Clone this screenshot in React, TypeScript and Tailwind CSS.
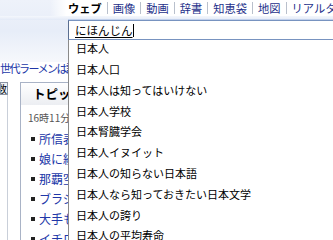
export default function App() {
  const items = [
    "日本人",
    "日本人口",
    "日本人は知ってはいけない",
    "日本人学校",
    "日本腎臓学会",
    "日本人イヌイット",
    "日本人の知らない日本語",
    "日本人なら知っておきたい日本文学",
    "日本人の誇り",
    "日本人の平均寿命",
  ];
  const news = ["所信表明", "娘に絞殺", "那覇空港", "ブラジル", "大手も", "イチロー"];
  const navs = ["画像", "動画", "辞書", "知恵袋", "地図", "リアルタイム"];
  return (
    <div className="relative w-[333px] h-[240px] overflow-hidden bg-white font-['Noto_Sans_CJK_JP',sans-serif] text-black">
      {/* header */}
      <div className="h-[62px] bg-linear-to-b from-[#eef2fa] via-[#e7edf8] to-[#f6f8fc]">
        <div className="h-[16px] pl-[68px] flex items-center whitespace-nowrap text-[11.25px] leading-[14px] bg-linear-to-r from-transparent from-15% to-white to-20%">
          <span className="font-bold">ウェブ</span>
          {navs.map((n) => (
            <span key={n} className="flex items-center">
              <span className="mx-[5px] w-px h-[12px] bg-[#b9c0cc]" />
              <span className="text-[#24308a]">{n}</span>
            </span>
          ))}
        </div>
        <div className="h-[4px] bg-linear-to-b from-[#f4f7fc] to-[#e3eaf7]" />
        <div className="ml-[68px] w-[300px] h-[20px] bg-white border border-[#7893c0] border-l-[#5a6e90] shadow-[0_-1px_0_#c2d1ec] flex items-center pl-[6px]">
          <span className="text-[11.5px] leading-[14px] underline underline-offset-[2px] decoration-1">にほんじん</span>
          <span className="w-px h-[13px] bg-black" />
        </div>
      </div>

      {/* body */}
      <div className="-mt-[1px] text-[11px] tracking-[-1.5px] leading-[14px] text-[#2137a8] whitespace-nowrap">世代ラーメンは読者数</div>
      <div className="flex mt-[7px]">
        <div className="w-[8px] flex flex-col">
          <div className="h-[13px] border border-[#8b95a5] bg-[#f1f3f6] flex justify-end overflow-hidden text-[10px] leading-[11px]">
            <span className="whitespace-nowrap">件数</span>
          </div>
          <div className="h-[150px] border-r border-[#c9cfd9]" />
        </div>
        <div className="ml-[12px] w-[120px] h-[170px] border border-[#a9b3c6]">
          <div className="h-[22px] bg-linear-to-b from-[#ffffff] to-[#eceef2] flex items-center pl-[12px] text-[12.5px] font-bold whitespace-nowrap">
            トピックス
          </div>
          <div className="pl-[7px] mt-[6px] text-[10px] leading-[14px] text-[#555]">16時11分更新</div>
          <div className="mt-[4px] flex flex-col">
            {news.map((n) => (
              <div key={n} className="h-[20px] flex items-center pl-[10px] whitespace-nowrap">
                <span className="w-[4px] h-[4px] bg-[#222] mr-[4px]" />
                <span className="text-[12px] text-[#2137a8]">{n}</span>
              </div>
            ))}
          </div>
        </div>
      </div>

      {/* suggestion dropdown */}
      <div className="absolute left-[68px] top-[40px] w-[300px] h-[210px] bg-white border-l border-[#8a8a8a]">
        <div className="-mt-[2px]">
          {items.map((t) => (
            <div key={t} className="h-[20.8px] flex items-center pl-[7px] text-[11px] whitespace-nowrap">
              {t}
            </div>
          ))}
        </div>
      </div>
    </div>
  );
}
